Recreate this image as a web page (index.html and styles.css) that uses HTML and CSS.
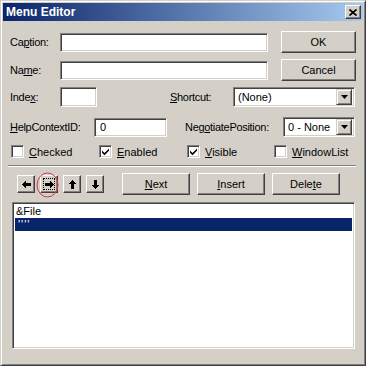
FILE: index.html
```html
<!DOCTYPE html>
<html lang="en">

<head>
    <meta charset="UTF-8" />
    <title>Menu Editor</title>
    <link rel="stylesheet" href="styles.css">
</head>

<body>
    <div class="window">
        <div class="titlebar">
            <span class="title">Menu Editor</span>
            <span class="close">
                <svg width="8" height="7" viewBox="0 0 8 7"><path d="M0.5 0.5 L7.5 6.5 M7.5 0.5 L0.5 6.5" stroke="#000" stroke-width="1.7" /></svg>
            </span>
        </div>

        <div class="client">
            <div class="row row-top">
                <span class="lbl lbl-main">Ca<u>p</u>tion:</span>
                <div class="edit edit-wide"></div>
                <button class="btn btn-side">OK</button>
            </div>
            <div class="row row-next">
                <span class="lbl lbl-main">Na<u>m</u>e:</span>
                <div class="edit edit-wide"></div>
                <button class="btn btn-side">Cancel</button>
            </div>

            <div class="row row-index">
                <span class="lbl lbl-main">Inde<u>x</u>:</span>
                <div class="edit edit-index"></div>
                <span class="lbl lbl-shortcut"><u>S</u>hortcut:</span>
                <div class="combo combo-shortcut">
                    <span class="combo-text">(None)</span>
                    <span class="drop"><svg width="7" height="4" viewBox="0 0 7 4"><path d="M0 0h7l-3.5 4z" fill="#000" /></svg></span>
                </div>
            </div>

            <div class="row row-help">
                <span class="lbl lbl-help"><u>H</u>elpContextID:</span>
                <div class="edit edit-help"><span class="edit-text">0</span></div>
                <span class="lbl lbl-neg">Neg<u>o</u>tiatePosition:</span>
                <div class="combo combo-neg">
                    <span class="combo-text">0 - None</span>
                    <span class="drop"><svg width="7" height="4" viewBox="0 0 7 4"><path d="M0 0h7l-3.5 4z" fill="#000" /></svg></span>
                </div>
            </div>

            <div class="row row-checks">
                <label class="chk"><span class="box"></span><span><u>C</u>hecked</span></label>
                <label class="chk"><span class="box"><svg width="9" height="9" viewBox="0 0 9 9"><path d="M1 3.5 L3.5 6 L8 1.5 V3.8 L3.5 8.3 L1 5.8z" fill="#000" /></svg></span><span><u>E</u>nabled</span></label>
                <label class="chk"><span class="box"><svg width="9" height="9" viewBox="0 0 9 9"><path d="M1 3.5 L3.5 6 L8 1.5 V3.8 L3.5 8.3 L1 5.8z" fill="#000" /></svg></span><span><u>V</u>isible</span></label>
                <label class="chk chk-last"><span class="box"></span><span><u>W</u>indowList</span></label>
            </div>

            <div class="sep"></div>

            <div class="row row-buttons">
                <button class="btn arrow">
                    <svg width="9" height="7" viewBox="0 0 9 7" shape-rendering="crispEdges"><path d="M0 3h1v1H0z M1 2h1v3H1z M2 1h1v5H2z M3 0h1v7H3z M4 2h5v3H4z" fill="#000" /></svg>
                </button>
                <button class="btn arrow focused">
                    <svg width="9" height="7" viewBox="0 0 9 7" shape-rendering="crispEdges"><path d="M8 3h1v1H8z M7 2h1v3H7z M6 1h1v5H6z M5 0h1v7H5z M0 2h5v3H0z" fill="#000" /></svg>
                </button>
                <button class="btn arrow">
                    <svg width="7" height="9" viewBox="0 0 7 9" shape-rendering="crispEdges"><path d="M3 0h1v1H3z M2 1h3v1H2z M1 2h5v1H1z M0 3h7v1H0z M2 4h3v5H2z" fill="#000" /></svg>
                </button>
                <button class="btn arrow">
                    <svg width="7" height="9" viewBox="0 0 7 9" shape-rendering="crispEdges"><path d="M3 8h1v1H3z M2 7h3v1H2z M1 6h5v1H1z M0 5h7v1H0z M2 0h3v5H2z" fill="#000" /></svg>
                </button>
                <button class="btn btn-action btn-first"><u>N</u>ext</button>
                <button class="btn btn-action"><u>I</u>nsert</button>
                <button class="btn btn-action">Dele<u>t</u>e</button>
            </div>

            <div class="listbox">
                <div class="item">&amp;File</div>
                <div class="item selected">''''</div>
            </div>

            <svg class="mark" width="23" height="26" viewBox="0 0 23 26">
                <ellipse cx="11.5" cy="13" rx="10.5" ry="12" fill="none" stroke="#e0323c" stroke-width="1" />
            </svg>
        </div>
    </div>
</body>

</html>
```

FILE: styles.css
```css
* {
    box-sizing: border-box;
}

body {
    margin: 0;
    font-family: 'Liberation Sans', Arial, sans-serif;
    font-size: 11px;
    color: #000;
    background: #d4d0c8;
}

u {
    text-decoration-thickness: 1px;
    text-underline-offset: 1px;
}

.window {
    width: 366px;
    height: 366px;
    display: flex;
    flex-direction: column;
    padding: 2px;
    background: #d4d0c8;
    border: 1px solid;
    border-color: #d4d0c8 #404040 #404040 #d4d0c8;
    box-shadow: inset 1px 1px #fff, inset -1px -1px #808080;
}

.titlebar {
    height: 18px;
    flex: none;
    display: flex;
    align-items: center;
    justify-content: space-between;
    padding: 0 2px 0 3px;
    background: linear-gradient(to right, #0a246a, #a6caf0);
    color: #fff;
    font-weight: bold;
    font-size: 12px;
}

.close {
    width: 16px;
    height: 14px;
    display: flex;
    align-items: center;
    justify-content: center;
    background: #d4d0c8;
    border: 1px solid;
    border-color: #fff #404040 #404040 #fff;
    box-shadow: inset -1px -1px #808080;
}

.client {
    position: relative;
    flex: 1;
    display: flex;
    flex-direction: column;
    padding: 1px 0 0 7px;
}

.row {
    display: flex;
    align-items: center;
    flex: none;
}

.row-top {
    margin-top: 9px;
    height: 22px;
}

.row-next {
    margin-top: 6px;
    height: 22px;
}

.row-index {
    margin-top: 6px;
    height: 20px;
}

.row-help {
    margin-top: 10px;
    height: 20px;
}

.row-checks {
    margin-top: 8px;
    height: 13px;
}

.row-buttons {
    margin-top: 6px;
    height: 22px;
}

.lbl {
    flex: none;
    white-space: nowrap;
    letter-spacing: -0.3px;
}

.lbl-main {
    width: 50px;
}

.lbl-shortcut {
    margin-left: 73px;
    width: 63px;
}

.lbl-help {
    width: 84px;
}

.lbl-neg {
    margin-left: 18px;
    width: 98px;
}

.edit,
.combo,
.listbox {
    flex: none;
    background: #fff;
    border: 1px solid;
    border-color: #808080 #fff #fff #808080;
    box-shadow: inset 1px 1px #404040, inset -1px -1px #d4d0c8;
}

.edit {
    height: 19px;
    display: flex;
    align-items: center;
}

.edit-wide {
    width: 208px;
}

.edit-index {
    width: 37px;
    height: 20px;
}

.edit-help {
    width: 73px;
}

.edit-text {
    padding-left: 5px;
}

.combo {
    height: 20px;
    display: flex;
    align-items: center;
    justify-content: space-between;
    padding: 2px;
}

.combo-shortcut {
    width: 122px;
}

.combo-neg {
    width: 72px;
}

.combo-text {
    padding-left: 2px;
    white-space: nowrap;
}

.drop {
    width: 16px;
    height: 16px;
    display: flex;
    align-items: center;
    justify-content: center;
    background: #d4d0c8;
    border: 1px solid;
    border-color: #d4d0c8 #404040 #404040 #d4d0c8;
    box-shadow: inset 1px 1px #fff, inset -1px -1px #808080;
}

.btn {
    flex: none;
    position: relative;
    height: 22px;
    padding: 0;
    font: inherit;
    color: #000;
    background: #d4d0c8;
    border: 1px solid;
    border-color: #fff #404040 #404040 #fff;
    box-shadow: inset -1px -1px #808080, inset 1px 1px #d4d0c8;
    display: flex;
    align-items: center;
    justify-content: center;
}

.btn-side {
    width: 75px;
    margin-left: 13px;
}

.arrow {
    width: 18px;
    height: 18px;
    margin-left: 5px;
}

.arrow:first-child {
    margin-left: 7px;
}

.focused::after {
    content: '';
    position: absolute;
    inset: 2px;
    border: 1px dotted #000;
}

.btn-action {
    width: 68px;
    margin-left: 7px;
}

.btn-first {
    margin-left: 18px;
}

.chk {
    width: 88px;
    display: flex;
    align-items: center;
    gap: 5px;
    flex: none;
}

.chk:first-child {
    margin-left: 1px;
}

.chk-last {
    width: auto;
    margin-left: -1px;
}

.box {
    width: 13px;
    height: 13px;
    flex: none;
    display: flex;
    align-items: center;
    justify-content: center;
    background: #fff;
    border: 1px solid;
    border-color: #808080 #fff #fff #808080;
    box-shadow: inset 1px 1px #404040, inset -1px -1px #d4d0c8;
}

.sep {
    flex: none;
    margin: 7px 0 0 -2px;
    width: 348px;
    height: 2px;
    border-top: 1px solid #808080;
    border-bottom: 1px solid #fff;
}

.listbox {
    margin: 7px 0 0 2px;
    width: 343px;
    height: 147px;
    padding: 2px;
}

.item {
    height: 13px;
    line-height: 13px;
    padding-left: 1px;
}

.selected {
    background: #0a246a;
    color: #fff;
    padding-left: 3px;
    letter-spacing: 1px;
}

.mark {
    position: absolute;
    left: 33px;
    top: 151px;
}
```
